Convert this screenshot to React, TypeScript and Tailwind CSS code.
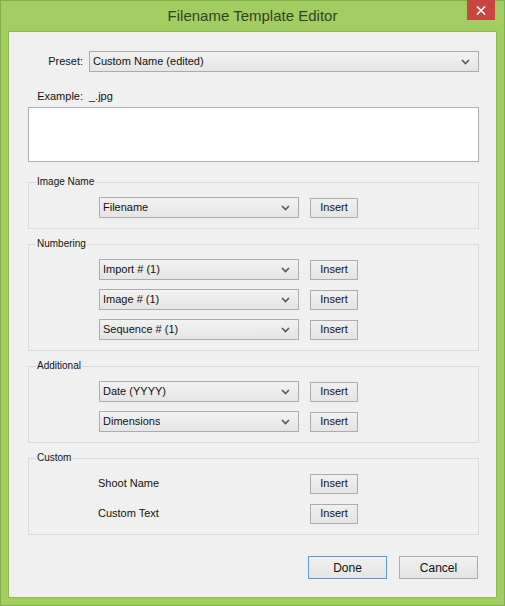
import React from 'react';

type Row = { kind: 'select' | 'text'; label: string };

interface TokenGroup {
  title: string;
  rows: Row[];
}

const groups: TokenGroup[] = [
  { title: 'Image Name', rows: [{ kind: 'select', label: 'Filename' }] },
  {
    title: 'Numbering',
    rows: [
      { kind: 'select', label: 'Import # (1)' },
      { kind: 'select', label: 'Image # (1)' },
      { kind: 'select', label: 'Sequence # (1)' },
    ],
  },
  {
    title: 'Additional',
    rows: [
      { kind: 'select', label: 'Date (YYYY)' },
      { kind: 'select', label: 'Dimensions' },
    ],
  },
  {
    title: 'Custom',
    rows: [
      { kind: 'text', label: 'Shoot Name' },
      { kind: 'text', label: 'Custom Text' },
    ],
  },
];

const ChevronIcon: React.FC = () => (
  <svg width="9" height="6" viewBox="0 0 9 6" fill="none" className="shrink-0">
    <path d="M1 1l3.5 3.5L8 1" stroke="#5b5b5b" strokeWidth="1.7" />
  </svg>
);

const CloseIcon: React.FC = () => (
  <svg width="10" height="9" viewBox="0 0 10 9" fill="none">
    <path d="M1 0.5l8 8M9 0.5l-8 8" stroke="#ffffff" strokeWidth="1.6" />
  </svg>
);

const Combo: React.FC<{ value: string; className?: string }> = ({ value, className }) => (
  <div
    className={`h-[21px] flex items-center justify-between border border-[#acacac] bg-linear-to-b from-[#f2f2f2] to-[#e5e5e5] pl-[3px] pr-[8px] ${className ?? ''}`}
  >
    <span className="truncate">{value}</span>
    <ChevronIcon />
  </div>
);

const PushButton: React.FC<{ label: string; isDefault?: boolean; className?: string }> = ({ label, isDefault, className }) => (
  <button
    type="button"
    className={`flex items-center justify-center border bg-linear-to-b from-[#f0f0f0] to-[#e5e5e5] ${isDefault ? 'border-[#5b9bd5]' : 'border-[#acacac]'} ${className ?? ''}`}
  >
    {label}
  </button>
);

const GroupBox: React.FC<{ group: TokenGroup }> = ({ group }) => (
  <div className="relative border border-[#dadada] pt-[14px] pb-[10px] pl-[70px] flex flex-col gap-[9px]">
    <span className="absolute left-[7px] top-[-7px] px-[1px] bg-[#f0f0f0] text-[10px] leading-[12px]">
      {group.title}
    </span>
    {group.rows.map((row) => (
      <div key={row.label} className="flex items-center h-[21px]">
        {row.kind === 'select' ? (
          <Combo value={row.label} className="w-[200px]" />
        ) : (
          <span className="w-[201px] -ml-[1px]">{row.label}</span>
        )}
        <PushButton label="Insert" className="ml-[11px] w-[48px] h-[20px]" />
      </div>
    ))}
  </div>
);

const App: React.FC = () => {
  return (
    <div className="w-[505px] h-[606px] flex flex-col bg-[#a1cd62] border border-[#84ae4b] font-['Liberation_Sans',Arial,sans-serif] text-[11px] text-[#111]">
      {/* caption bar */}
      <div className="relative h-[30px] shrink-0 flex items-center justify-center">
        <span className="text-[15px] text-[#34421f] pt-[1px]">Filename Template Editor</span>
        <div className="absolute right-[9px] top-[-1px] w-[28px] h-[20px] bg-[#c7463f] flex items-center justify-center">
          <CloseIcon />
        </div>
      </div>

      {/* client area */}
      <div className="flex-1 mx-[7px] mb-[7px] border border-[#8db851] bg-[#f0f0f0] pl-[19px] pr-[17px] pt-[19px] flex flex-col">
        <div className="flex items-center h-[21px]">
          <span className="w-[55px] text-right">Preset:</span>
          <Combo value="Custom Name (edited)" className="flex-1 ml-[6px]" />
        </div>

        <div className="flex items-center h-[14px] mt-[17px]">
          <span className="w-[55px] text-right">Example:</span>
          <span className="ml-[6px]">_.jpg</span>
        </div>

        <div className="mt-[4px] h-[55px] bg-white border border-[#abadb3]" />

        <div className="mt-[20px] flex flex-col gap-[15px]">
          {groups.map((g) => (
            <GroupBox key={g.title} group={g} />
          ))}
        </div>

        <div className="mt-[21px] flex justify-end gap-[12px] pr-[1px]">
          <PushButton label="Done" isDefault className="w-[79px] h-[23px] text-[12px]" />
          <PushButton label="Cancel" className="w-[79px] h-[23px] text-[12px]" />
        </div>
      </div>
    </div>
  );
};

export default App;
